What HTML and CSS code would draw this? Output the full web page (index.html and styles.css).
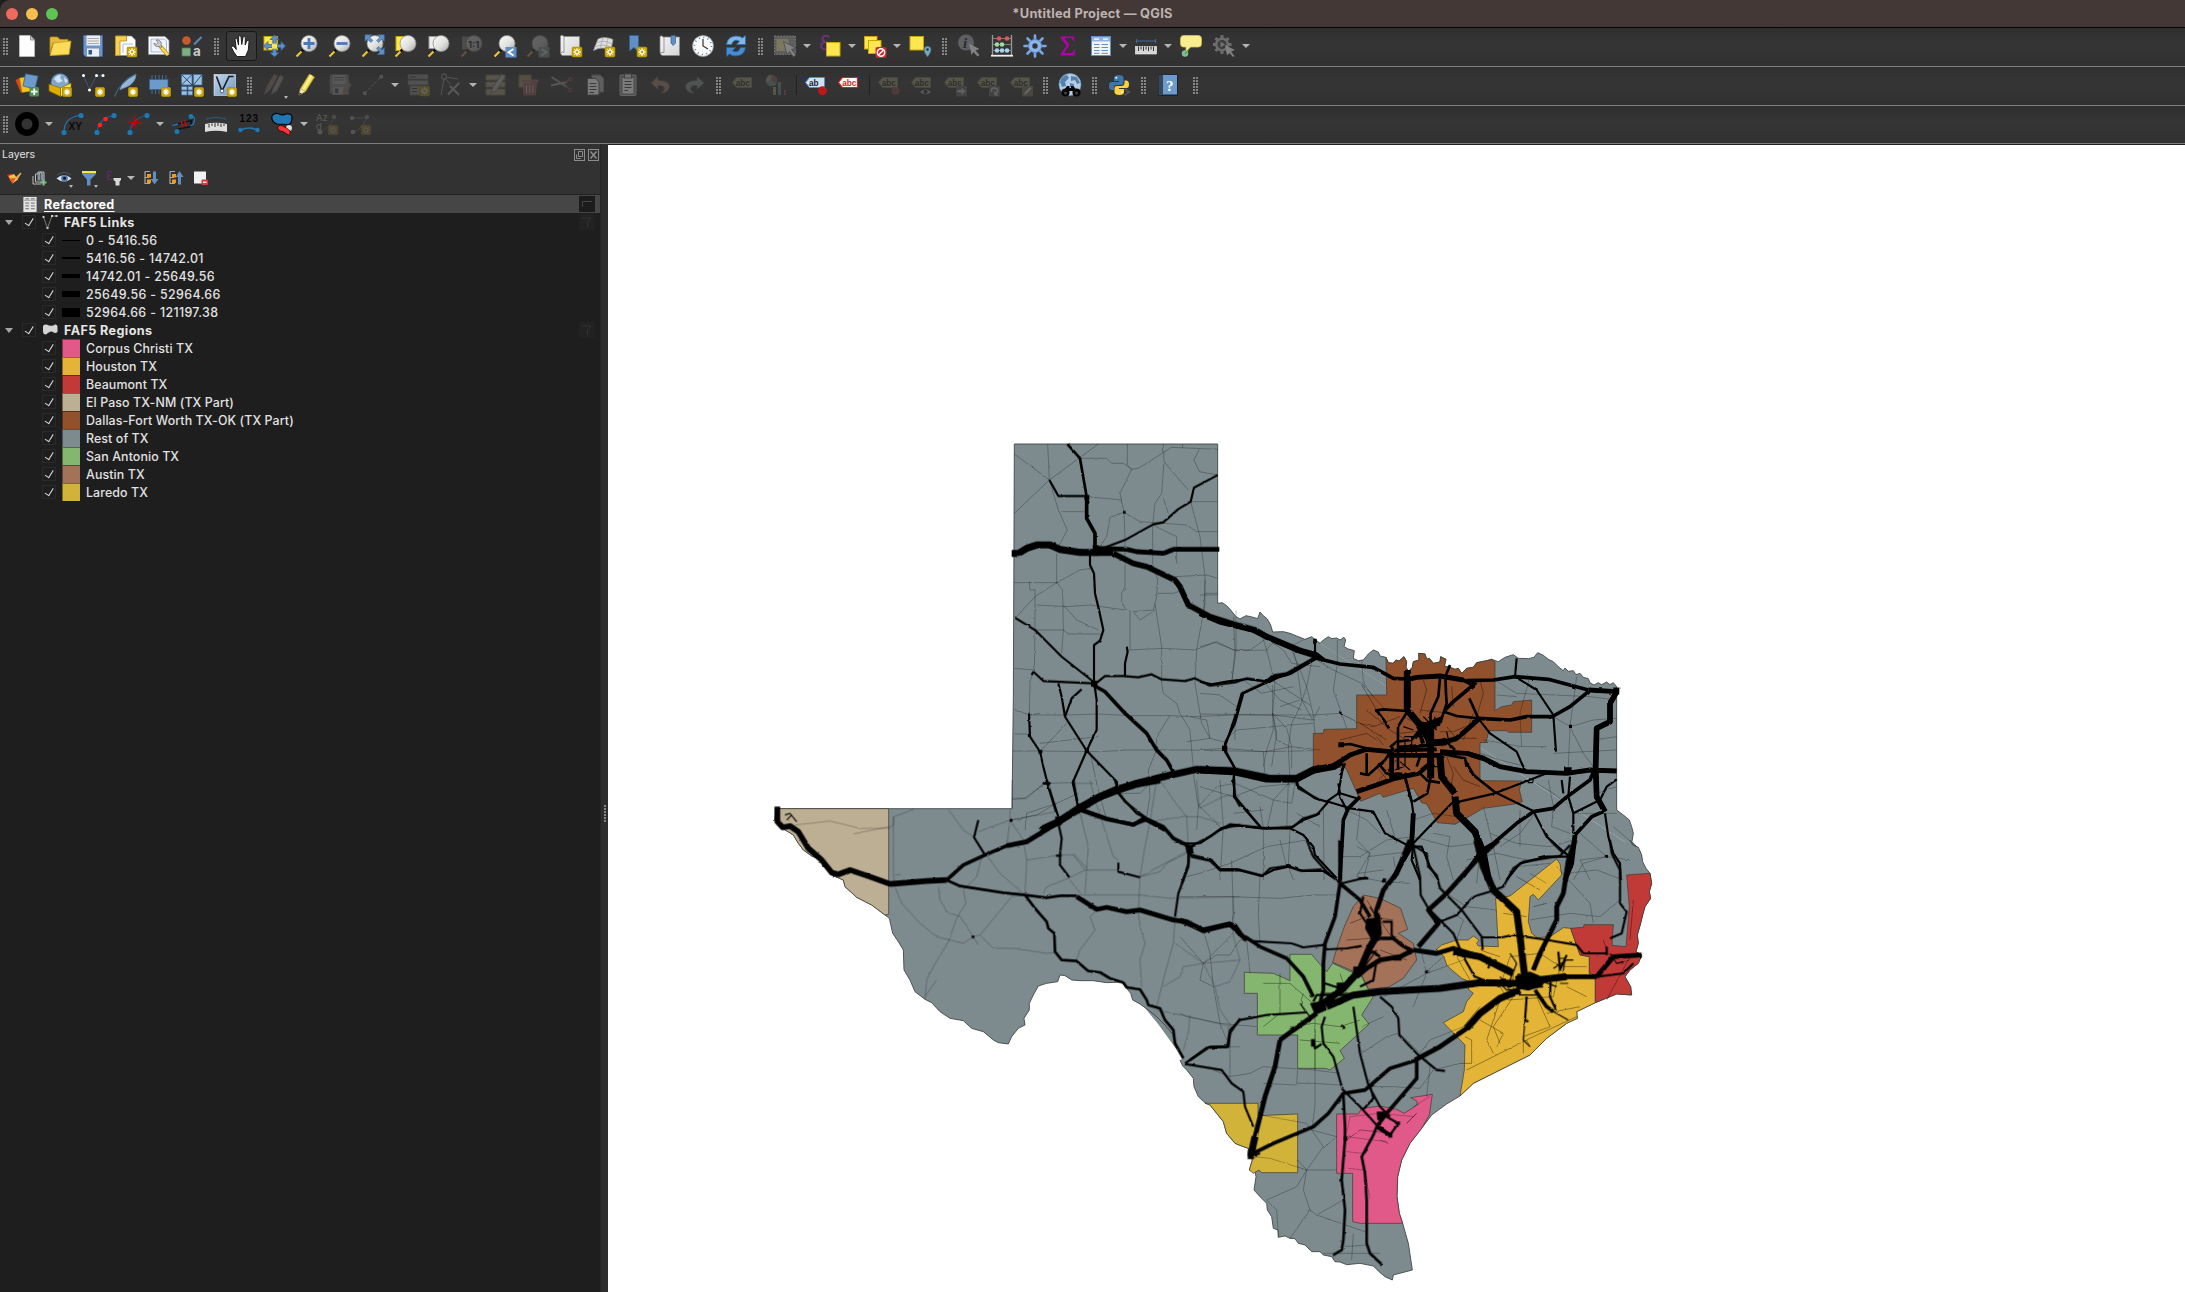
FILE: index.html
```html
<!DOCTYPE html>
<html lang="en">
<head>
<meta charset="utf-8">
<title>*Untitled Project — QGIS</title>
<link rel="stylesheet" href="styles.css">
</head>
<body>
<svg class="defs" aria-hidden="true">
<defs>
<linearGradient id="lens" x1="0" y1="0" x2="1" y2="1"><stop offset="0" stop-color="#fafafa"/><stop offset=".55" stop-color="#e2e2e0"/><stop offset="1" stop-color="#a8a8a6"/></linearGradient>
<linearGradient id="paper" x1="0" y1="0" x2="1" y2="1"><stop offset="0" stop-color="#f4f4f4"/><stop offset="1" stop-color="#d6d6d6"/></linearGradient>
<linearGradient id="blueg" x1="0" y1="0" x2="1" y2="1"><stop offset="0" stop-color="#c3d7ec"/><stop offset="1" stop-color="#6c98c7"/></linearGradient>
<symbol id="badge" viewBox="0 0 11 11"><rect x=".5" y=".5" width="10" height="10" rx="1.6" fill="#c9a60a" stroke="#b08f00"/><path d="M5.5 2V9M2 5.5H9M3.1 3.1L7.9 7.9M7.9 3.1L3.1 7.9" stroke="#fff" stroke-width="1.2"/></symbol>
<symbol id="badge2" viewBox="0 0 11 11"><rect x=".5" y=".5" width="10" height="10" rx="1.6" fill="#c9a60a" stroke="#b08f00"/><circle cx="5.5" cy="5.5" r="2" fill="none" stroke="#fff" stroke-width="1.1"/><path d="M5.5 1.5V4M5.5 7V9.500M1.500 5.500H4M7 5.500H9.500M2.700 2.700L4.300 4.300M8.300 8.300L6.700 6.700M8.300 2.700L6.700 4.300M2.700 8.300L4.300 6.700" stroke="#fff" stroke-width=".9"/></symbol>
<symbol id="mag" viewBox="0 0 24 24"><path d="M1.500 22.500L8 16" stroke="#f1c232" stroke-width="2.200"/><path d="M6.500 17.500L10 14" stroke="#111" stroke-width="2.600"/><circle cx="14" cy="9.500" r="8" fill="url(#lens)" stroke="#8b8b88" stroke-width=".8"/></symbol>
<symbol id="i-new" viewBox="0 0 24 24"><path d="M4.500 1.500H15.500L19.500 6V22.500H4.500Z" fill="#fdfdfd" stroke="#ccc" stroke-width=".6"/><path d="M15.500 1.500V6H19.500Z" fill="#ccc" stroke="#777" stroke-width=".8"/></symbol>
<symbol id="i-open" viewBox="0 0 24 24"><path d="M2 4Q2 3 3 3H9.500L12 5.500H20V9L5 9L2 19Z" fill="#e4b93c" stroke="#b78d11" stroke-width=".8"/><path d="M5.500 9L23 7L21 20.500L2 21.500Z" fill="#fddc5a" stroke="#c79e21" stroke-width=".8"/></symbol>
<symbol id="i-save" viewBox="0 0 24 24"><path d="M2.500 1.500H21.500V22.500H4.500L2.500 20.500Z" fill="#6b96cb" stroke="#44699c" stroke-width=".8"/><rect x="5.500" y="1.500" width="13.500" height="10" fill="#eee"/><path d="M6.500 4.500H18M6.500 7H18M6.500 9.500H18" stroke="#aaa" stroke-width="1"/><rect x="6" y="14.500" width="12" height="8" fill="#eee"/><rect x="7.500" y="16" width="3.500" height="4.500" fill="#34588a"/></symbol>
<symbol id="i-layout" viewBox="0 0 24 24"><path d="M1.500 2H17.500L21.500 6V21.500H1.500Z" fill="#fdfdfd" stroke="#888" stroke-width=".6"/><path d="M1.500 2H12.500V7H6V21.500H1.500Z" fill="#f6d04f" stroke="#b78d11" stroke-width=".8"/><path d="M9 10H19M9 10V19" stroke="#8fb1d8" stroke-width=".8"/><use href="#badge2" x="12.500" y="12.500" width="11" height="11"/></symbol>
<symbol id="i-layman" viewBox="0 0 24 24"><path d="M1.500 2.500H18L22 6.500V20.500H1.500Z" fill="#fdfdfd" stroke="#999" stroke-width=".7"/><path d="M4 5V18H19.500V7L17.500 5Z" fill="#eef4ff" stroke="#90a8d8" stroke-width=".8"/><path d="M13 12L21 21" stroke="#b78d11" stroke-width="4"/><path d="M13 12L21 21" stroke="#f6d95f" stroke-width="2.500"/><path d="M7 9Q7 13 12 12.500L14.500 13.500L14 8Q12 5 9 6L11 8.500L9.500 10.500Z" fill="#ccc" stroke="#777" stroke-width=".8"/></symbol>
<symbol id="i-style" viewBox="0 0 24 24"><circle cx="6.500" cy="6.500" r="4.300" fill="#c75b2b"/><path d="M14 10.500L21.500 3" stroke="#5b86b6" stroke-width="2.200"/><rect x="2" y="14" width="8.500" height="8" fill="#7fae82" stroke="#4f7d52" stroke-width=".8"/><text x="13" y="22" font-size="13.500" font-weight="700" fill="#c8c8c8" font-family="Inter">a</text></symbol>
<symbol id="i-pan" viewBox="0 0 24 24"><path d="M8 22.500Q4 17.500 2.500 13.500Q2.500 11.500 4.500 12L7.300 15.500L6 5Q6.500 3.300 8 4.500L9.500 11L9.700 2.500Q10.800 .8 12 2.500L12.800 10.500L14 3Q15.300 1.700 16.300 3.500L16.200 11L18 6.500Q19.700 5.500 20 7.500L19.300 16L16.500 22.500Z" fill="#fff" stroke="#111" stroke-width=".9"/></symbol>
<symbol id="i-pansel" viewBox="0 0 24 24"><rect x="2" y="2.500" width="13.500" height="13.500" fill="#fde64f" stroke="#c9a60a"/><path d="M12.500 1L17 5.500H14.200V10.500H19V7.500L23.500 12L19 16.500V13.500H14.200V18.500H17L12.500 23L8 18.500H10.800V13.500H6V16.500L1.500 12L6 7.500V10.500H10.800V5.500H8Z" fill="#5f8fc4" stroke="#2f5f94" stroke-width=".7"/><rect x="10" y="9.700" width="5" height="5" fill="#fde64f"/></symbol>
<symbol id="i-zin" viewBox="0 0 24 24"><use href="#mag" width="24" height="24"/><path d="M14 4V15M8.500 9.500H19.500" stroke="#4a7ab5" stroke-width="2.800"/></symbol>
<symbol id="i-zout" viewBox="0 0 24 24"><use href="#mag" width="24" height="24"/><path d="M8.500 9.500H19.500" stroke="#4a7ab5" stroke-width="2.800"/></symbol>
<symbol id="i-zfull" viewBox="0 0 24 24"><use href="#mag" width="24" height="24"/><path d="M4 .8H11L8.500 3L12 6.500L9.800 8.500L6.300 5.300L4 7.500ZM23.300 .8V7.500L21 5.300L17.500 8.500L15.500 6.500L19 3L16.500 .8ZM23.300 20.500H16.500L19 18L15.500 14.500L17.500 12.500L21 16L23.300 13.500Z" fill="#5f8fc4" stroke="#3a6a9f" stroke-width=".5"/></symbol>
<symbol id="i-zsel" viewBox="0 0 24 24"><rect x="2" y="2.500" width="13" height="14" fill="#fde64f" stroke="#c9a60a"/><use href="#mag" width="24" height="24"/></symbol>
<symbol id="i-zlay" viewBox="0 0 24 24"><rect x="2" y="2.500" width="13" height="12" fill="#eee" stroke="#999"/><use href="#mag" width="24" height="24"/></symbol>
<symbol id="i-znat" viewBox="0 0 24 24"><rect x="2" y="2.500" width="13" height="13" fill="#999"/><use href="#mag" width="24" height="24"/><text x="8" y="13.500" font-size="9.500" font-weight="700" font-family="Inter" fill="#111">1:1</text></symbol>
<symbol id="i-zlast" viewBox="0 0 24 24"><use href="#mag" width="24" height="24"/><rect x="12.500" y="13" width="11" height="10.500" fill="#5f8fc4"/><path d="M20.500 15L15.500 18.200L20.500 21.500" fill="none" stroke="#fff" stroke-width="1.800"/></symbol>
<symbol id="i-znext" viewBox="0 0 24 24"><use href="#mag" width="24" height="24"/><rect x="12.500" y="13" width="11" height="10.500" fill="#8aa"/><path d="M15.500 15L20.500 18.200L15.500 21.500" fill="none" stroke="#fff" stroke-width="1.800"/></symbol>
<symbol id="i-map" viewBox="0 0 24 24"><path d="M5 2.500H20.500V21.500H3Q1.500 20 1.500 18V2Q2.500 .5 4.500 2Z" fill="url(#paper)" stroke="#888" stroke-width=".7"/><path d="M5 2V18.500Q3.500 17 1.700 19" fill="none" stroke="#888" stroke-width=".8"/><use href="#badge2" x="12.500" y="12.500" width="11" height="11"/></symbol>
<symbol id="i-map3" viewBox="0 0 24 24"><path d="M6 5Q13 2 21 5.500L19 16Q10 12 1.500 16.500Z" fill="#ddd" stroke="#999" stroke-width=".7"/><path d="M4 9Q12 5 20 10M2.500 13Q11 9 19.500 13.500M11 4L8 14M16 4L14 14" fill="none" stroke="#aaa" stroke-width=".8"/><use href="#badge2" x="12.500" y="12.500" width="11" height="11"/></symbol>
<symbol id="i-bmnew" viewBox="0 0 24 24"><path d="M4.500 1.500H13.500V18L9 13.500L4.500 17Z" fill="#5f8fc4" stroke="#2f5f94" stroke-width=".8"/><use href="#badge2" x="11.500" y="12.500" width="11" height="11"/></symbol>
<symbol id="i-bm" viewBox="0 0 24 24"><path d="M5 3H21.500V21.500H4Q2 20 2 18V2.500Q3.500 1 5 3Z" fill="url(#paper)" stroke="#888" stroke-width=".7"/><path d="M6 3V18.500H2" fill="none" stroke="#999"/><path d="M13 1.500H17.500V9L15.200 11.500L13 9Z" fill="#5f8fc4" stroke="#2f5f94" stroke-width=".7"/></symbol>
<symbol id="i-clock" viewBox="0 0 24 24"><circle cx="12" cy="12" r="10.500" fill="#fafafa" stroke="#999" stroke-width=".8"/><circle cx="12" cy="12" r="8.500" fill="none" stroke="#4a7ab5" stroke-width="1.600" stroke-dasharray="1 3.450"/><path d="M12 5V12L17 15" fill="none" stroke="#333" stroke-width="1.200"/></symbol>
<symbol id="i-refresh" viewBox="0 0 24 24"><path d="M2.500 10.500Q3.500 2.500 12 2Q16.500 2 18.500 4L21.500 1.500V10.500H12.500L15.500 7.300Q10 4 7.500 10.500Z" fill="#86b5e4" stroke="#2d6fb4" stroke-width=".9"/><path d="M21.500 13.500Q20.500 21.500 12 22Q7.500 22 5.500 20L2.500 22.500V13.500H11.500L8.500 16.700Q14 20 16.500 13.500Z" fill="#4a8bd0" stroke="#2460a0" stroke-width=".9"/></symbol>
<symbol id="i-select" viewBox="0 0 24 24"><rect x="1.500" y="2" width="21" height="18.500" fill="#999" stroke="#ddd" stroke-dasharray="1.500 1.500"/><rect x="3.500" y="5" width="12" height="12" fill="#dfd49a"/><path d="M10.500 7.500L23 14L18.500 15.500L23 21L20.500 23L16.500 17.500L14 21Z" fill="#eee" stroke="#555" stroke-width=".7"/></symbol>
<symbol id="i-expr" viewBox="0 0 24 24"><path d="M11.500 3.500Q10 1.500 7.500 1.800Q4 2.500 4.500 5.500Q5 8 8.500 8Q3 8.500 3 11.500Q3.500 15.500 7.500 15.500Q10.500 15 11.500 12.500" fill="none" stroke="#6b3575" stroke-width="2"/><rect x="8.500" y="8.500" width="13.500" height="13.500" fill="#fde64f" stroke="#c9a60a"/></symbol>
<symbol id="i-desel" viewBox="0 0 24 24"><rect x="1.500" y="2.500" width="12.500" height="12.500" fill="#fde64f" stroke="#c9a60a"/><rect x="5.500" y="6.500" width="12.500" height="13" fill="#fde64f" stroke="#c9a60a"/><rect x="12.500" y="13" width="11" height="11" rx="2" fill="#d2232a"/><circle cx="18" cy="18.500" r="3.700" fill="none" stroke="#fff" stroke-width="1.500"/><path d="M15.500 21L20.500 16" stroke="#fff" stroke-width="1.500"/></symbol>
<symbol id="i-selloc" viewBox="0 0 24 24"><rect x="2" y="2.500" width="13.500" height="13.500" fill="#fde64f" stroke="#c9a60a"/><path d="M19.500 23Q16 18.500 16 15.500Q16.200 12.300 19.500 12.300Q23 12.500 23 15.500Q23 18.500 19.500 23Z" fill="#7aa7bd" stroke="#3f6f88" stroke-width=".8"/><circle cx="19.500" cy="15.500" r="1.300" fill="#234"/></symbol>
<symbol id="i-ident" viewBox="0 0 24 24"><circle cx="9" cy="8.500" r="8" fill="#99a"/><text x="6" y="14" font-size="15" font-style="italic" font-weight="700" font-family="Liberation Serif" fill="#222">i</text><path d="M12 9.500L22.500 15L18.500 16.500L22.500 21L20.500 22.500L16.500 18L14.500 21Z" fill="#eee"/></symbol>
<symbol id="i-abacus" viewBox="0 0 24 24"><path d="M2.500 1V21M21.500 1V21" stroke="#999" stroke-width="1.300"/><path d="M2.500 4.500H21.500M2.500 10.500H21.500M2.500 16.500H21.500" stroke="#888" stroke-width=".9"/><path d="M1 21.700H23" stroke="#eee" stroke-width="1.800"/><g fill="#e5545b"><circle cx="9" cy="4.500" r="2.300"/><circle cx="17" cy="4.500" r="2.300"/></g><g fill="#9edc9b"><circle cx="7" cy="10.500" r="2.300"/><circle cx="12" cy="10.500" r="2.300"/></g><g fill="#a5d4ee"><circle cx="7" cy="16.500" r="2.300"/><circle cx="12" cy="16.500" r="2.300"/><circle cx="17" cy="16.500" r="2.300"/></g></symbol>
<symbol id="i-gear" viewBox="0 0 24 24"><path d="M12 1.500V22.500M1.500 12H22.500M4.500 4.500L19.500 19.500M19.500 4.500L4.500 19.500" stroke="#79a7e3" stroke-width="2.600" stroke-linecap="round"/><circle cx="12" cy="12" r="6.500" fill="#8db5ea" stroke="#5b8bd0" stroke-width="1"/><circle cx="12" cy="12" r="2.700" fill="#343434"/></symbol>
<symbol id="i-sum" viewBox="0 0 24 24"><path d="M4.500 2.500H18L18.500 7.500H17.500Q16.500 4 14 4H8.500L13.500 11L8 19H15Q17.500 18.500 18.500 15.500H19.500L18.500 21.500H4.500V20L10.500 12L4.500 3.700Z" fill="#b400a8"/></symbol>
<symbol id="i-table" viewBox="0 0 24 24"><rect x="2.500" y="2.500" width="19" height="19" fill="#f4f4f4" stroke="#5f8fc4"/><rect x="3" y="3" width="18" height="4.500" fill="#8fb5df"/><path d="M5 5.200H10M14 5.200H19" stroke="#fff" stroke-width="1.300"/><path d="M5 10.500H10.500M12.500 10.500H19M5 13.500H10.500M12.500 13.500H19M5 16.500H10.500M12.500 16.500H19M5 19.300H10.500M12.500 19.300H19" stroke="#5f8fc4" stroke-width="1"/></symbol>
<symbol id="i-measure" viewBox="0 0 24 24"><path d="M2 7H22M2.500 5V9M21.500 5V9" stroke="#3f6a94" stroke-width="1.200"/><rect x="1.500" y="12.500" width="21" height="7.500" fill="#d5d5d5" stroke="#f3f3f3" stroke-width=".6"/><path d="M4.500 12.500V17M7 12.500V15.500M9.500 12.500V17M12 12.500V15.500M14.500 12.500V17M17 12.500V15.500M19.500 12.500V17" stroke="#333" stroke-width="1"/></symbol>
<symbol id="i-tip" viewBox="0 0 24 24"><path d="M4.500 1.500H19.500Q22.500 1.500 22.500 5V9.500Q22.500 13 19.500 13H12Q9 14 8 19Q6.500 17 7 13H4.500Q1.500 13 1.500 9.500V5Q1.500 1.500 4.500 1.500Z" fill="#f9ed94" stroke="#d9c243" stroke-width=".8"/><circle cx="6" cy="19.500" r="3.200" fill="#7fbf86"/><path d="M6 20L10 15" stroke="#4c8a53" stroke-width="1"/></symbol>
<symbol id="i-act" viewBox="0 0 24 24"><path d="M10 1V20M1 10.500H19.500M3.500 4L16.500 17M16.500 4L3.500 17" stroke="#bbb" stroke-width="3"/><circle cx="10" cy="10.500" r="7" fill="#bbb"/><circle cx="10" cy="10.500" r="4.500" fill="#444"/><path d="M8.500 7.500L13 10.500L8.500 13.500Z" fill="#ccc"/><path d="M13 11L23 16L19 17.500L22.500 22L21 23L17.500 19L15 21.500Z" fill="#eee"/></symbol>
<symbol id="i-dsm" viewBox="0 0 24 24"><path d="M.5 7L5 5L9 17L6 20Z" fill="#d9481c"/><path d="M4.500 5L16 3L18 18L7 19.500Z" fill="#f4c518" stroke="#9a7a00" stroke-width=".5"/><path d="M10.500 .8L23 3L20 16L8 13Z" fill="#6b9acb" stroke="#39638f" stroke-width=".8"/><rect x="14.500" y="14" width="9.500" height="9.500" rx="1.500" fill="#4f9157"/><path d="M19.200 15.500V22M16 18.700H22.500" stroke="#fff" stroke-width="1.800"/></symbol>
<symbol id="i-gpkg" viewBox="0 0 24 24"><circle cx="12" cy="9.500" r="9" fill="#7fa6cc" stroke="#41688f" stroke-width=".6"/><path d="M6 6Q9 1.500 13 2L12 5L15 8L10 10L8 8ZM16 4L20 8L17 10Z" fill="#d5e3ef"/><path d="M1 11L12.500 15V23.500L1 18Z" fill="#e0ad00" stroke="#8a6a00" stroke-width=".7"/><path d="M12.500 15L23 10V18L12.500 23.500Z" fill="#ffe347" stroke="#8a6a00" stroke-width=".7"/><use href="#badge" x="14" y="14" width="10" height="10"/></symbol>
<symbol id="i-shp" viewBox="0 0 24 24"><path d="M2.500 3L8.500 16L15.500 3H22" fill="none" stroke="#3c5878" stroke-width="1"/><g fill="#fff"><circle cx="2.500" cy="2.500" r="1.500"/><circle cx="8.500" cy="17" r="1.500"/><circle cx="15.500" cy="2.500" r="1.500"/><circle cx="22" cy="2.500" r="1.500"/></g><use href="#badge" x="14" y="14" width="10" height="10"/></symbol>
<symbol id="i-spl" viewBox="0 0 24 24"><path d="M22 1Q22 5 20 8Q17 13 10 15Q7 16 6 17Q7 8 22 1Z" fill="url(#blueg)" stroke="#6c93b5" stroke-width=".6"/><path d="M22 1Q6 9 .5 23.500" fill="none" stroke="#3f678f" stroke-width="1.100"/><use href="#badge" x="14" y="14" width="10" height="10"/></symbol>
<symbol id="i-mem" viewBox="0 0 24 24"><path d="M5 2V21M8.500 2V21M12 2V21M15.500 2V21M19 2V21" stroke="#4c6b8c" stroke-width="1"/><rect x="2.500" y="6.500" width="18.500" height="10" fill="#6b9acb" stroke="#39638f" stroke-width=".8"/><use href="#badge" x="14" y="14" width="10" height="10"/></symbol>
<symbol id="i-mesh" viewBox="0 0 24 24"><path d="M1.500 1.500H12V12H1.500ZM13.500 1.500H22V12H13.500ZM1.500 13.500H7V17H1.500ZM8 13.500H12.500V17H8ZM1.500 18H7V22H1.500ZM8 18H12.500V22H8Z" fill="#9cc0e4" stroke="#44719f" stroke-width=".8"/><path d="M1.500 1.500L12 12M12 1.500L1.500 12M22 1.500L13.500 12" stroke="#1c3f63" stroke-width=".9"/><use href="#badge" x="14" y="14" width="10" height="10"/></symbol>
<symbol id="i-virt" viewBox="0 0 24 24"><rect x="1" y="1.500" width="21.500" height="21" fill="url(#blueg)" stroke="#dfe9f3" stroke-width=".6"/><path d="M3.500 3.500L9 18L16 3.500H20.500" fill="none" stroke="#1a1a1a" stroke-width="1.600"/><circle cx="9" cy="18" r="1.800" fill="#fff" stroke="#333" stroke-width=".7"/><use href="#badge" x="14" y="14" width="10" height="10"/></symbol>
<symbol id="i-edits" viewBox="0 0 24 24"><path d="M2 22L4 15L12 1L16 3L8 17Z" fill="#a58f86"/><path d="M9 22L11 15L18 2L22 4L15 18Z" fill="#b8b0aa" stroke="#555" stroke-width=".6"/></symbol>
<symbol id="i-pencil" viewBox="0 0 24 24"><path d="M4 22L5.500 15.500L14.500 1L19.500 4L10.500 18.500Z" fill="#f2df55" stroke="#a8932c" stroke-width=".8"/><path d="M16.500 2.500L8 17" stroke="#fff7a8" stroke-width="1.500"/><path d="M4 22L5.500 15.500L10.500 18.500Z" fill="#f2e8c8" stroke="#8a7a40" stroke-width=".5"/><path d="M4 22L4.600 19.500L6.600 20.700Z" fill="#222"/></symbol>
<symbol id="i-saved" viewBox="0 0 24 24"><path d="M2 1.500H20.500V21.500H4L2 19.500Z" fill="#999" stroke="#777" stroke-width=".8"/><rect x="5" y="2" width="12.500" height="9" fill="#ccc"/><path d="M6 4.500H16.500M6 7H16.500" stroke="#666"/><rect x="5.500" y="14" width="10" height="7.500" fill="#ccc"/><rect x="7" y="15.500" width="3.500" height="4.500" fill="#444"/><path d="M14 22L15 18L20 9.500L23.500 11.500L18 20.500Z" fill="#a58f76"/></symbol>
<symbol id="i-line" viewBox="0 0 24 24"><path d="M4 20L20 4" stroke="#aaa" stroke-dasharray="3 1.500"/><path d="M2 18.500H5.500V22H2ZM18.500 2H22V5.500H18.500Z" fill="#bbb"/></symbol>
<symbol id="i-addrec" viewBox="0 0 24 24"><path d="M2 1.500H22V6H2ZM2 7.500H22V12H2ZM4 13V22H20V13" fill="#aaa" stroke="#777" stroke-width=".8"/><path d="M6 15.500H11M6 18.500H11M13 15.500H18M4 4H10" stroke="#333"/><use href="#badge2" x="13" y="12.500" width="11" height="11"/></symbol>
<symbol id="i-vert" viewBox="0 0 24 24"><circle cx="5" cy="3.500" r="2.500" fill="none" stroke="#aaa" stroke-width="1.300"/><path d="M5 6L2 22M7 4L19 6M7 6L11 11" stroke="#bbb" stroke-width="1"/><path d="M11 13L20 22M9 21.500L20 10" stroke="#ccc" stroke-width="2"/></symbol>
<symbol id="i-multi" viewBox="0 0 24 24"><path d="M2 2H21V7H2ZM2 9H21V14H2ZM2 16H21V22H2Z" fill="#c9c088" stroke="#8a855a"/><path d="M7 20L9 14L18 1L21.500 3.500L12.500 17.500Z" fill="#ddd" stroke="#666" stroke-width=".7"/></symbol>
<symbol id="i-del" viewBox="0 0 24 24"><rect x="2" y="2" width="12" height="12" fill="#b9ae6a" stroke="#8a855a"/><path d="M4 7H21V9H4ZM6 10H19.500L18.500 22H7Z" fill="#b55b5b" stroke="#d99" stroke-width=".6"/><path d="M9.500 12V20M12.700 12V20M16 12V20" stroke="#eee" stroke-width="1"/></symbol>
<symbol id="i-cut" viewBox="0 0 24 24"><path d="M1.500 4L17 14M1 12.500L17 9" stroke="#bbb" stroke-width="2"/><path d="M15 9L20 6.500M16 13L19 16" stroke="#a55" stroke-width="1.600"/><circle cx="20.500" cy="6" r="1.700" fill="none" stroke="#a55" stroke-width="1.200"/><circle cx="20" cy="17" r="1.700" fill="none" stroke="#a55" stroke-width="1.200"/></symbol>
<symbol id="i-copy" viewBox="0 0 24 24"><path d="M9 2H17L20.500 5.500V19H9Z" fill="#999" stroke="#777"/><path d="M4.500 5.500H12.500L16 9V22H4.500Z" fill="#ddd" stroke="#555"/><path d="M6.500 10.500H13.500M6.500 13.500H13.500M6.500 16.500H13.500M6.500 19.500H11" stroke="#444"/></symbol>
<symbol id="i-paste" viewBox="0 0 24 24"><rect x="4" y="2" width="16" height="20.500" rx="1" fill="#777" stroke="#aaa"/><rect x="6.500" y="5" width="11" height="15.500" fill="#ddd"/><rect x="8.500" y="1" width="7" height="4" fill="#ccc" stroke="#555"/><path d="M8.500 8.500H15.500M8.500 11.500H15.500M8.500 14.500H15.500M8.500 17.500H12" stroke="#444"/></symbol>
<symbol id="i-undo" viewBox="0 0 24 24"><path d="M2 10L9 3.500V7.500Q20 7.500 20.500 13.500Q20 19.500 12 20.500Q16.500 17 15 14Q13.500 12 9 12.500V16.500Z" fill="#c7a08a" stroke="#7d5a43" stroke-width=".7"/></symbol>
<symbol id="i-redo" viewBox="0 0 24 24"><path d="M22 10L15 3.500V7.500Q4 7.500 3.500 13.500Q4 19.500 12 20.500Q7.500 17 9 14Q10.500 12 15 12.500V16.500Z" fill="#9fb7ac" stroke="#5a6d64" stroke-width=".7"/></symbol>
<symbol id="tagd" viewBox="0 0 24 24"><path d="M1.500 9.500L5.500 4.500H20.500V14.500H5.500Z" fill="#c4bd8e" stroke="#8a855a" stroke-width=".8"/><text x="4.800" y="12.600" font-size="8.200" font-weight="700" font-family="Liberation Sans" fill="#111">abc</text></symbol>
<symbol id="i-diag" viewBox="0 0 24 24"><path d="M7.500 7.500V1.500A6 6 0 0 1 13 9.500Z" fill="#a66"/><path d="M7.500 7.500L13 10A6 6 0 0 1 2 9Z" fill="#7a9"/><path d="M7.500 7.500L2 9A6 6 0 0 1 7.500 1.500Z" fill="#cb8"/><path d="M9 14H12V22H9Z" fill="#cb8"/><path d="M14 9H17V22H14Z" fill="#7a9"/><path d="M20 17H22V22H20Z" fill="#a66"/></symbol>
<symbol id="i-labpin" viewBox="0 0 24 24"><path d="M1.500 9.500L5.500 4.500H20.500V14.500H5.500Z" fill="#cfe3f9" stroke="#4a8fd8" stroke-width="1"/><text x="5" y="12.600" font-size="8.200" font-weight="700" font-family="Liberation Sans" fill="#222">ab</text><path d="M18 8V16" stroke="#ddd" stroke-width="2.500"/><circle cx="18.500" cy="17.800" r="4.500" fill="#b7191c"/></symbol>
<symbol id="i-labred" viewBox="0 0 24 24"><path d="M1.500 9.500L5.500 4.500H20.500V14.500H5.500Z" fill="#fff" stroke="#e8191c" stroke-width="1.200"/><text x="5.200" y="12.600" font-size="8.200" font-weight="700" font-family="Liberation Sans" fill="#d8191c">abc</text></symbol>
<symbol id="i-l1" viewBox="0 0 24 24"><use href="#tagd" width="24" height="24"/><circle cx="18.500" cy="18" r="4" fill="#a05050"/></symbol>
<symbol id="i-l2" viewBox="0 0 24 24"><use href="#tagd" width="24" height="24"/><path d="M10 19Q15.500 13.500 21 19Q15.500 23.500 10 19Z" fill="#ccc"/><circle cx="15.500" cy="18.700" r="2" fill="#123"/></symbol>
<symbol id="i-l3" viewBox="0 0 24 24"><use href="#tagd" width="24" height="24"/><rect x="13" y="13" width="11" height="10.500" fill="#777"/><path d="M14.500 17H18.500V14.500L22.500 18.300L18.500 22V19.500H14.500Z" fill="#eee"/></symbol>
<symbol id="i-l4" viewBox="0 0 24 24"><use href="#tagd" width="24" height="24"/><rect x="13" y="13" width="11" height="10.500" fill="#777"/><path d="M15.500 19Q14.500 15 18.500 15Q22.500 15.500 21.500 19L19 22M19 22V18.500M19 22H21.500" fill="none" stroke="#eee" stroke-width="1.500"/></symbol>
<symbol id="i-l5" viewBox="0 0 24 24"><use href="#tagd" width="24" height="24"/><rect x="13" y="13" width="11" height="10.500" fill="#8a8468"/><path d="M15 22L16 19L21 14L22.500 15.500L17.500 21Z" fill="#fff"/></symbol>
<symbol id="i-meta" viewBox="0 0 24 24"><circle cx="12" cy="11.500" r="11" fill="#b4cde6" stroke="#6d90b0" stroke-width=".7"/><path d="M2 9Q3 3 9 2L11 5L7 9L8 13L4 14ZM13 3L19 4L22 10L19 11L17 7L13 8ZM12 10L16 11L15 15L12 14Z" fill="#5580ab"/><path d="M9 13H11.500V15H13V13H15.500L19 18H5.500Z" fill="#050505"/><circle cx="7.500" cy="19.500" r="4" fill="#050505"/><circle cx="18.500" cy="19.500" r="4" fill="#050505"/><circle cx="7.500" cy="20" r="1.500" fill="#444"/><circle cx="18.500" cy="20" r="1.500" fill="#444"/></symbol>
<symbol id="i-py" viewBox="0 0 24 24"><path d="M11.500 2Q7 2 7 5V8H12V9H4.500Q2 9 2 13Q2 17 5 17H7V14Q7 12 9.500 12H14Q16.500 12 16.500 9.500V5Q16.500 2 11.500 2Z" fill="#3b77a8"/><path d="M12.500 22Q17 22 17 19V16H12V15H19.500Q22 15 22 11.500Q22 7.500 19 7.500H17.500V10.500Q17 13 14.500 13H10Q7.500 13 7.500 15.500V19Q7.500 22 12.500 22Z" fill="#fdd23e"/><circle cx="9.300" cy="4.800" r="1" fill="#fff"/><circle cx="14.800" cy="19.200" r="1" fill="#fff"/><path d="M17.500 16L22.500 19L17.500 22" fill="none" stroke="#555" stroke-width="1.700"/></symbol>
<symbol id="i-help" viewBox="0 0 24 24"><rect x="2" y="1.500" width="20" height="21.500" fill="#182330"/><rect x="2.500" y="2" width="4.500" height="20" fill="#36475a"/><rect x="7" y="2" width="14" height="19.500" fill="#6b9acb"/><text x="10" y="17.500" font-size="15" font-family="Liberation Serif" font-weight="700" fill="#fff">?</text></symbol>
<symbol id="i-ring" viewBox="0 0 24 24"><circle cx="12" cy="12" r="8.700" fill="#333" stroke="#000" stroke-width="6.400"/></symbol>
<symbol id="i-xy" viewBox="0 0 24 24"><path d="M4 20Q4 5 20.500 3.500" fill="none" stroke="#1f77b4" stroke-width="1.200"/><circle cx="4" cy="20.500" r="2.600" fill="#1f77b4"/><circle cx="21" cy="3.500" r="2.600" fill="#1f77b4"/><text x="8.500" y="17.500" font-size="10" font-weight="700" font-family="Liberation Sans" fill="#0a0a0a">XY</text></symbol>
<symbol id="i-red" viewBox="0 0 24 24"><path d="M4 20Q5 7 20.500 3.500" fill="none" stroke="#1c5f90" stroke-width="1.200"/><circle cx="4" cy="20.500" r="2.600" fill="#1f77b4"/><circle cx="21" cy="3.500" r="2.600" fill="#1f77b4"/><circle cx="7" cy="13" r="2.300" fill="#f22"/><circle cx="12.500" cy="7" r="2.300" fill="#f22"/></symbol>
<symbol id="i-cross" viewBox="0 0 24 24"><path d="M4 20Q5 7 20.500 3.500" fill="none" stroke="#1c5f90" stroke-width="1.200"/><circle cx="4" cy="20.500" r="2.600" fill="#1f77b4"/><circle cx="21" cy="3.500" r="2.600" fill="#1f77b4"/><path d="M2 9.500L16 11.500M5.500 15.500L12.500 7M8 3.500L10 16.500" stroke="#c00" stroke-width="1.300"/></symbol>
<symbol id="i-par" viewBox="0 0 24 24"><path d="M2 13L20.500 8.500L19.500 14.500L5.500 17.500L6 19" fill="none" stroke="#0d1720" stroke-width="1.600"/><path d="M22 5L24 6.500L22.500 12L19 14M1.500 13.500L7 12" fill="none" stroke="#1f77b4" stroke-width="1.300"/><path d="M10 9L12 15M13.500 8.500L15.500 14.500" stroke="#e00" stroke-width="1.200"/><circle cx="20" cy="4.500" r="2.500" fill="#1f77b4"/><circle cx="6" cy="19.500" r="2.500" fill="#1f77b4"/></symbol>
<symbol id="i-rul" viewBox="0 0 24 24"><path d="M2 7Q12 4 22 7" fill="none" stroke="#2d5272" stroke-width="1.500"/><path d="M1 12Q12 9.500 23 12V20Q12 17.500 1 20Z" fill="#ddd"/><path d="M5 12V15.500M8 11.500V14M11 11V15M14 11V14M17 11.500V15M20 12V14" stroke="#333" stroke-width="1"/></symbol>
<symbol id="i-123" viewBox="0 0 24 24"><text x="2.500" y="10" font-size="10" font-weight="700" font-family="Liberation Sans" letter-spacing=".9" fill="#050505">123</text><path d="M4 18Q12 14 20 18" fill="none" stroke="#1f77b4" stroke-width="1.500"/><circle cx="3.500" cy="18" r="2.300" fill="#1f77b4"/><circle cx="20.500" cy="18" r="2.300" fill="#1f77b4"/></symbol>
<symbol id="i-poly" viewBox="0 0 24 24"><path d="M2 4Q4 .5 8 1.500Q12 4 16 2Q21.500 1 22 5Q22 11 19 12.500Q12 12 7 12Q1 10 2 4Z" fill="#1f77b4" stroke="#050505" stroke-width="1.200"/><circle cx="19" cy="16" r="3" fill="#ddd"/><path d="M7.500 15Q10 12 13 14Q17 16 20 19Q21 22 18.500 23Q16 21.500 13 19.500Q8 19.500 7.500 15Z" fill="#f33" stroke="#200" stroke-width=".8"/></symbol>
<symbol id="i-az" viewBox="0 0 24 24"><text x="1" y="8.500" font-size="9.500" font-family="Inter" fill="#ccc">Az</text><text x="1" y="17.500" font-size="9.500" font-family="Inter" fill="#ccc">d</text><circle cx="5" cy="20" r="2.500" fill="#bbb"/><circle cx="19" cy="5" r="2.200" fill="#998"/><path d="M7 19Q15 16 19 5" fill="none" stroke="#777" stroke-width=".8"/><g opacity=".7"><use href="#badge2" x="12.500" y="12.500" width="11" height="11"/></g></symbol>
<symbol id="i-az2" viewBox="0 0 24 24"><path d="M3 6H19M6 20Q15 16 19 5" fill="none" stroke="#999" stroke-width=".8"/><circle cx="4" cy="6" r="2" fill="#bbb"/><circle cx="5" cy="20" r="2.300" fill="#bbb"/><circle cx="19" cy="5" r="2.200" fill="#998"/><g opacity=".7"><use href="#badge2" x="12.500" y="12.500" width="11" height="11"/></g></symbol>
<symbol id="p-brush" viewBox="0 0 16 16"><path d="M1 5L5 3.500L9 11L6.500 13.500Z" fill="#d22"/><path d="M2.500 6L8 4L12 9.500L6.500 13.500Z" fill="#fbc04a"/><path d="M6.500 13.500L3 8.500L10 8Z" fill="#e05a28"/><path d="M9 8L14.500 2.500L15.500 3.500L11 10Z" fill="#e8a85a"/></symbol>
<symbol id="p-add" viewBox="0 0 16 16"><path d="M2 6V14H10M4.500 4V12H13V2H7V4Z" fill="none" stroke="#bbb"/><rect x="6" y="2" width="7.500" height="9" fill="#9ab" opacity=".35"/><path d="M8 10V3.500Q9.500 1 11 3.500V10" fill="none" stroke="#bcd"/><path d="M12.500 9.500V15.500M9.500 12.500H15.500" stroke="#7fbf86" stroke-width="2.200"/></symbol>
<symbol id="p-eye" viewBox="0 0 16 16"><path d="M.5 8.500Q8 2 15.500 8.500Q8 14.500 .5 8.500Z" fill="#dde6ee"/><circle cx="8.500" cy="8.300" r="3.400" fill="#4f7fae"/><circle cx="8.500" cy="8.300" r="1.500" fill="#0b1725"/><path d="M1 5Q8 0 15 5" fill="none" stroke="#555"/></symbol>
<symbol id="p-fil" viewBox="0 0 16 16"><path d="M1 1H15V3.500H1Z" fill="#ffe347"/><path d="M1 4H15L9.500 9.500V15.500H6V9.500Z" fill="#5f8fc4"/></symbol>
<symbol id="p-exp" viewBox="0 0 16 16"><path d="M6.500 2Q1.500 0 1.500 3.500Q1.500 5.500 4.500 5.500Q.5 6 1.500 8.500Q3.500 10.500 6.500 8.500" fill="none" stroke="#5a2d62" stroke-width="1.500"/><path d="M7.500 8H15V10L13.500 11.500V15.500H9.500V11.500L7.500 10Z" fill="#d8d8d8"/></symbol>
<symbol id="p-down" viewBox="0 0 16 16"><path d="M2 1.500H7M2 1.500V13.500H7M2 7.500H6" fill="none" stroke="#aaa" stroke-width="1.200"/><path d="M4 4H8V7.500H4ZM4 9.500H8V13H4Z" fill="#f39a1e"/><path d="M10 1.500H13V9H15.500L11.500 14.500L7.800 9H10Z" fill="#5f8fc4"/></symbol>
<symbol id="p-up" viewBox="0 0 16 16"><path d="M2 1.500H7M2 1.500V13.500H7M2 7.500H6" fill="none" stroke="#aaa" stroke-width="1.200"/><path d="M4 4H8V7.500H4ZM4 9.500H8V13H4Z" fill="#f39a1e"/><path d="M10 14.500H13V7H15.500L11.500 1L7.800 7H10Z" fill="#5f8fc4"/></symbol>
<symbol id="p-rem" viewBox="0 0 16 16"><rect x="1" y="1.500" width="12" height="12" fill="#f1f1f1"/><rect x="8.500" y="9.500" width="6.500" height="5.500" rx="1" fill="#d8383c"/><path d="M10 12.300H13.500" stroke="#fff" stroke-width="1.300"/></symbol>
</defs>
</svg>

<div class="titlebar">
  <div class="lights"><i class="close"></i><i class="min"></i><i class="max"></i></div>
  <div class="title">*Untitled Project — QGIS</div>
</div>

<div class="toolbar">
  <i class="grip first"></i>
  <svg class="tool"><use href="#i-new"/></svg><svg class="tool"><use href="#i-open"/></svg><svg class="tool"><use href="#i-save"/></svg><svg class="tool"><use href="#i-layout"/></svg><svg class="tool"><use href="#i-layman"/></svg><svg class="tool"><use href="#i-style"/></svg>
  <i class="grip"></i>
  <span class="pressed"><svg class="tool"><use href="#i-pan"/></svg></span><svg class="tool"><use href="#i-pansel"/></svg><svg class="tool"><use href="#i-zin"/></svg><svg class="tool"><use href="#i-zout"/></svg><svg class="tool"><use href="#i-zfull"/></svg><svg class="tool"><use href="#i-zsel"/></svg><svg class="tool"><use href="#i-zlay"/></svg><svg class="tool dim"><use href="#i-znat"/></svg><svg class="tool"><use href="#i-zlast"/></svg><svg class="tool dim"><use href="#i-znext"/></svg><svg class="tool"><use href="#i-map"/></svg><svg class="tool"><use href="#i-map3"/></svg><svg class="tool"><use href="#i-bmnew"/></svg><svg class="tool"><use href="#i-bm"/></svg><svg class="tool"><use href="#i-clock"/></svg><svg class="tool"><use href="#i-refresh"/></svg>
  <i class="grip"></i>
  <svg class="tool half"><use href="#i-select"/></svg><i class="drop"></i><svg class="tool"><use href="#i-expr"/></svg><i class="drop"></i><svg class="tool"><use href="#i-desel"/></svg><i class="drop"></i><svg class="tool"><use href="#i-selloc"/></svg>
  <i class="grip"></i>
  <svg class="tool half"><use href="#i-ident"/></svg><svg class="tool"><use href="#i-abacus"/></svg><svg class="tool"><use href="#i-gear"/></svg><svg class="tool"><use href="#i-sum"/></svg><svg class="tool"><use href="#i-table"/></svg><i class="drop"></i><svg class="tool"><use href="#i-measure"/></svg><i class="drop"></i><svg class="tool"><use href="#i-tip"/></svg><svg class="tool half"><use href="#i-act"/></svg><i class="drop"></i>
</div>

<div class="toolbar">
  <i class="grip first"></i>
  <svg class="tool"><use href="#i-dsm"/></svg><svg class="tool"><use href="#i-gpkg"/></svg><svg class="tool"><use href="#i-shp"/></svg><svg class="tool"><use href="#i-spl"/></svg><svg class="tool"><use href="#i-mem"/></svg><svg class="tool"><use href="#i-mesh"/></svg><svg class="tool"><use href="#i-virt"/></svg>
  <i class="grip"></i>
  <span class="menu"><svg class="tool dim"><use href="#i-edits"/></svg><i class="tip"></i></span><svg class="tool"><use href="#i-pencil"/></svg><svg class="tool dim"><use href="#i-saved"/></svg><svg class="tool dim"><use href="#i-line"/></svg><i class="drop"></i><svg class="tool dim"><use href="#i-addrec"/></svg><svg class="tool dim"><use href="#i-vert"/></svg><i class="drop"></i><svg class="tool dim"><use href="#i-multi"/></svg><svg class="tool dim"><use href="#i-del"/></svg><svg class="tool dim"><use href="#i-cut"/></svg><svg class="tool half"><use href="#i-copy"/></svg><svg class="tool half"><use href="#i-paste"/></svg><svg class="tool dim"><use href="#i-undo"/></svg><svg class="tool dim"><use href="#i-redo"/></svg>
  <i class="grip"></i>
  <svg class="tool dim"><use href="#tagd"/></svg><svg class="tool dim"><use href="#i-diag"/></svg><i class="sep"></i><svg class="tool"><use href="#i-labpin"/></svg><svg class="tool"><use href="#i-labred"/></svg><i class="sep"></i><svg class="tool dim"><use href="#i-l1"/></svg><svg class="tool dim"><use href="#i-l2"/></svg><svg class="tool dim"><use href="#i-l3"/></svg><svg class="tool dim"><use href="#i-l4"/></svg><svg class="tool dim"><use href="#i-l5"/></svg>
  <i class="grip"></i>
  <svg class="tool"><use href="#i-meta"/></svg>
  <i class="grip"></i>
  <svg class="tool"><use href="#i-py"/></svg>
  <i class="grip"></i>
  <svg class="tool"><use href="#i-help"/></svg>
  <i class="grip end"></i>
</div>

<div class="toolbar last">
  <i class="grip first"></i>
  <svg class="tool"><use href="#i-ring"/></svg><i class="drop"></i><svg class="tool"><use href="#i-xy"/></svg><svg class="tool"><use href="#i-red"/></svg><svg class="tool"><use href="#i-cross"/></svg><i class="drop"></i><svg class="tool"><use href="#i-par"/></svg><svg class="tool"><use href="#i-rul"/></svg><svg class="tool"><use href="#i-123"/></svg><svg class="tool"><use href="#i-poly"/></svg><i class="drop"></i><svg class="tool dim"><use href="#i-az"/></svg><svg class="tool dim"><use href="#i-az2"/></svg>
</div>

<div class="main">
  <div class="panel">
    <div class="panel-head"><span>Layers</span>
      <svg width="27" height="14" fill="none" stroke="#8c8c8c"><rect x="1.500" y="1.500" width="10" height="11"/><path d="M5.500 3.500H9.500V8.500H5.500ZM3.500 6.500V10.500H7.500"/><rect x="15.500" y="1.500" width="10" height="11"/><path d="M17.500 3.500L23.500 10.500M23.500 3.500L17.500 10.500" stroke-width="1.500"/></svg>
    </div>
    <div class="panel-tools">
      <svg class="pt"><use href="#p-brush"/></svg><svg class="pt"><use href="#p-add"/></svg><span class="menu"><svg class="pt"><use href="#p-eye"/></svg><i class="tip"></i></span><span class="menu"><svg class="pt"><use href="#p-fil"/></svg><i class="tip"></i></span><svg class="pt"><use href="#p-exp"/></svg><i class="drop"></i><svg class="pt"><use href="#p-down"/></svg><svg class="pt"><use href="#p-up"/></svg><svg class="pt"><use href="#p-rem"/></svg>
    </div>
    <div class="tree">
      <div class="row selected"><svg class="lic tab" viewBox="0 0 16 18"><rect x="1" y="1" width="14" height="16" fill="#e4e4e4"/><path d="M1 4.500H15" stroke="#999"/><path d="M3 3H7M9 3H13M3 7.500H7M9 7.500H13M3 10.500H7M9 10.500H13M3 13.500H7M9 13.500H13" stroke="#666"/></svg><b class="u">Refactored</b><svg class="ind" viewBox="0 0 16 16"><path d="M3.500 10.500V5.500H13" fill="none" stroke="#444"/></svg></div>
      <div class="row"><i class="exp"></i><i class="chk"></i><svg class="lic" viewBox="0 0 16 16"><path d="M1.500 3L5.500 14L10 2H15" fill="none" stroke="#7a7a7a"/><path d="M.5 2H2.500V4H.500ZM4.500 13H6.500V15H4.500ZM9 1H11V3H9ZM13.500 1H15.500V3H13.500Z" fill="#ccc"/></svg><b>FAF5 Links</b><svg class="ind" viewBox="0 0 16 16"><path d="M3 4H12L8.500 8V13" fill="none" stroke="#333"/></svg></div>
      <div class="row sub"><i class="chk"></i><i class="ln l1"></i><span class="num">0 - 5416.56</span></div>
      <div class="row sub"><i class="chk"></i><i class="ln l2"></i><span class="num">5416.56 - 14742.01</span></div>
      <div class="row sub"><i class="chk"></i><i class="ln l3"></i><span class="num">14742.01 - 25649.56</span></div>
      <div class="row sub"><i class="chk"></i><i class="ln l4"></i><span class="num">25649.56 - 52964.66</span></div>
      <div class="row sub"><i class="chk"></i><i class="ln l5"></i><span class="num">52964.66 - 121197.38</span></div>
      <div class="row"><i class="exp"></i><i class="chk"></i><svg class="lic" viewBox="0 0 16 16"><path d="M1 4Q3 1.500 7 3.500Q11 4.500 13 2.500Q15.500 2 15.500 5V10Q13 12 10 9.500Q6 10 5 12Q1.500 13.500 1 10Z" fill="#d4d4d4"/></svg><b>FAF5 Regions</b><svg class="ind" viewBox="0 0 16 16"><path d="M3 4H12L8.500 8V13" fill="none" stroke="#333"/></svg></div>
      <div class="row sub"><i class="chk"></i><i class="sw corpus"></i><span>Corpus Christi TX</span></div>
      <div class="row sub"><i class="chk"></i><i class="sw houston"></i><span>Houston TX</span></div>
      <div class="row sub"><i class="chk"></i><i class="sw beaumont"></i><span>Beaumont TX</span></div>
      <div class="row sub"><i class="chk"></i><i class="sw elpaso"></i><span>El Paso TX-NM (TX Part)</span></div>
      <div class="row sub"><i class="chk"></i><i class="sw dallas"></i><span>Dallas-Fort Worth TX-OK (TX Part)</span></div>
      <div class="row sub"><i class="chk"></i><i class="sw rest"></i><span>Rest of TX</span></div>
      <div class="row sub"><i class="chk"></i><i class="sw sanantonio"></i><span>San Antonio TX</span></div>
      <div class="row sub"><i class="chk"></i><i class="sw austin"></i><span>Austin TX</span></div>
      <div class="row sub"><i class="chk"></i><i class="sw laredo"></i><span>Laredo TX</span></div>
    </div>
  </div>
  <div class="splitter"><i></i></div>
  <svg class="map" viewBox="608 145 1577 1147" width="1577" height="1147">
    <defs><filter id="rough" x="-5%" y="-5%" width="110%" height="110%"><feTurbulence type="fractalNoise" baseFrequency=".13" numOctaves="2" seed="4"/><feDisplacementMap in="SourceGraphic" scale="2" xChannelSelector="R" yChannelSelector="G"/></filter></defs>
    <path class="core" d="M1015 812L1022 798L1318 643L1640 853L1625 900L1184 1058L1160 1025L1080 925Z"/>
    <!-- Panhandle -->
    <g transform="translate(990 430) scale(.33333)">
      <path class="rest-f" d="M66 1134L70 800L73 42H683V520L697 518L710 527L722 540L738 560L750 567L768 557L790 562L803 566L810 546L820 557L832 567L842 585L848 606L880 605L900 610L920 618L945 628L965 620L990 640"/>
    </g>
    <!-- Trans-Pecos -->
    <g transform="translate(760 780) scale(.33333)">
      <path class="rest-f" d="M757 0V86H48L45 120L60 140L100 165L115 190L130 210L155 228L175 235L215 285L250 300L255 320L290 352L335 375L375 405L388 415L398 460L415 485L430 510L432 570L450 600L465 635L495 658L515 668L540 695L570 715L610 722L635 745L670 755L700 780L715 788L745 792L755 770L775 745L795 735L792 715L808 690L808 670L820 645L835 618L860 610L893 605L900 585L915 587L935 600L960 602L1000 602L1040 608L1085 606L1100 625L1112 640L1118 660L1140 672L1165 690L1190 710L1215 735L1240 765L1250 800L1272 840"/>
      <path class="rg" fill="#bcaf93" d="M48 86H386V403L375 405L335 375L290 352L255 320L250 300L215 285L175 235L155 228L130 210L115 190L100 165L60 140L45 120Z"/>
    </g>
    <!-- Red River and Dallas -->
    <g transform="translate(1200 580) scale(.33333)">
      <path class="rest-f" d="M360 190L370 180L385 170L395 176L410 174L420 180L432 172L437 180L432 200L445 207L463 212L460 235L475 242L490 240L505 222L520 210L535 216L540 228L558 232L565 248L580 250L588 240L597 243L612 230L620 245L618 262L626 274L637 262L640 245L657 240L656 220L675 222L680 238L688 235L700 250L720 246L722 230L738 238L733 258L750 262L765 268L775 265L785 280L800 265L820 262L830 248L860 242L875 238L895 245L915 232L940 224L955 235L985 236L1002 232L1013 218L1030 226L1045 238L1060 245L1075 260L1090 272L1095 264L1105 274L1120 272L1128 284L1140 280L1150 292L1165 296L1170 308L1182 315L1195 308L1205 314L1220 306L1230 314L1240 308L1250 320V690L1270 705L1288 720L1295 740L1300 760L1296 785L1310 800L1320 815"/>
      <path class="rg" fill="#91512d" d="M560 345L558 232L565 248L580 250L588 240L597 243L612 230L620 245L618 262L626 274L637 262L640 245L657 240L656 220L675 222L680 238L688 235L700 250L720 246L722 230L738 238L733 258L750 262L765 268L775 265L785 280L800 265L820 262L830 248L860 242L875 238L885 246V392L905 380L935 375L940 365L995 360V457H925L920 452L867 452L858 487L864 487L840 488V602L965 603L958 630L967 665L945 672L850 685L810 708L765 733L712 728L680 672L665 668L640 625L550 652L540 640L482 664L438 565L430 562L340 564V460H370L372 448L470 446V345Z"/>
    </g>
    <!-- Gulf coast -->
    <g transform="translate(1180 840) scale(.33333)">
      <path class="rest-f" d="M1350 0L1358 15L1375 22L1385 45L1388 65L1398 85L1410 100L1415 130L1408 155L1412 175L1395 200L1388 225L1382 250L1372 285L1375 310L1368 335L1385 345L1375 370L1350 390L1335 410L1352 440L1355 465L1310 462L1246 488L1190 515L1192 535L1160 550L1100 595L1050 645L980 680L880 730L840 768L800 792L755 825L725 865L690 910L665 960L653 1010L651 1070L658 1120L668 1150L685 1210L697 1290L640 1305L637 1320L615 1310L597 1295L580 1278L540 1270L500 1274L480 1266L465 1265L455 1250L430 1245L420 1235L395 1235L375 1215L355 1210L345 1196L330 1195L315 1188L295 1192L294 1170L280 1165L275 1130L262 1110L260 1090L240 1070L222 1050L228 1010L225 995L208 990L217 960L205 925L185 918L165 910L140 880L130 845L110 820L90 795L75 788L55 770L42 740L40 715L20 690L8 678L0 660"/>
      <path class="rg" fill="#e3b436" d="M1130 57L1140 72L1145 105L1075 180L1060 163L1050 170L1045 245L1055 280L1072 293L1110 290L1150 263L1172 265L1200 345L1228 350V400L1246 405V488L1190 515L1192 535L1160 550L1100 595L1050 645L980 680L880 730L840 768L853 690L855 615L790 548L850 515L860 485L880 460L865 448L868 425L845 415L830 402L815 390L800 375L792 350L770 328L785 315L830 300L865 300L880 288L897 300L890 310L895 318L955 320L947 175L990 168Z"/>
      <path class="rg" fill="#c23a38" d="M1172 265L1210 262L1212 254L1300 254L1296 316L1338 320L1348 200L1340 105L1410 100L1415 130L1408 155L1412 175L1395 200L1388 225L1382 250L1372 285L1375 310L1368 335L1385 345L1375 370L1350 390L1335 410L1352 440L1355 465L1310 462L1246 488V405L1228 400V350L1200 345Z"/>
      <path class="rg" fill="#a47159" d="M550 165L600 175L662 205L683 268L655 280L700 310L710 360L670 415L625 442L565 447L545 405L458 367L475 310L495 255L520 200Z"/>
      <path class="rg" fill="#85b66f" d="M330 343H395L430 385L440 395L458 370L545 410L563 445L580 470L545 525L567 552L480 632L493 655L450 690L437 685H353V585H232V460H193V397L280 400L330 422Z"/>
      <path class="rg" fill="#e15989" d="M470 822H535L545 805L600 798L650 808L672 820L712 795L710 783L692 773L757 763L748 825L725 865L690 910L665 960L653 1010L651 1070L658 1120L668 1150H540L518 1145V1000H470Z"/>
      <path class="rg" fill="#d2b33a" d="M75 790H234V827L353 822V998H245L237 990L220 1000L208 990L217 960L205 925L185 918L165 910L140 880L130 845L110 820L90 795Z"/>
    </g>

    <g filter="url(#rough)">
    <g class="thin">
      <path transform="translate(990 430) scale(.33333)" d="M73 72L178 150L73 250M173 42L178 150L205 240L232 300L205 350M178 150L325 42M270 85H350L365 100H400L425 118L445 115L520 68L545 52L683 58M412 42V105L425 118L390 190L402 247L405 330V470L395 490V520L410 540M520 42L522 95L515 190L495 220L488 285V400L503 450L500 500L490 540L430 545M522 95L560 140L595 180M628 58L612 90L628 125L683 135M577 42L578 55M290 200L395 210M402 247L360 262L350 320L330 350M402 247L450 275L550 282L590 285L620 305H683M520 205L535 250M602 215H683M602 215L630 320L645 440V520L620 660L615 760L635 880L660 925L700 935M488 285L560 320V400M215 245H290M73 458H200L270 420L305 415M200 370V458L135 500L75 565M118 455L120 480L135 482V600L133 720M200 458L218 480L220 600L215 670M140 525L230 530L300 525L405 540M220 525L260 570L325 600M220 600L235 612H340M135 600H220M420 540V660M495 540L450 570L430 545M418 660L520 655L615 660L680 635L730 660L780 660L830 625M495 520L515 650V760M555 440L650 435L683 445M503 490L550 490L580 480M645 490H683M730 560L735 660L725 760M73 715L133 720L120 750L118 850M118 855H230L325 852L420 857H540L600 860L735 855H850L968 870M73 838L118 855L150 850M118 910L150 965L230 880M68 963H150L325 965L420 960L600 960L825 965L905 950L990 960M73 912H118M150 940L325 920M515 760L520 790L560 820L570 850L600 900L605 960L610 1010M540 857L500 920L500 960M600 860L650 870L660 925L590 935M848 765V850L850 900L830 960L820 1010M905 640L920 700L935 810L968 870L990 830M870 830L930 810M848 850L890 895L905 950V1015M830 625L880 660L905 700L990 710M735 855L735 930M700 935L740 900L850 890M825 760L870 810L935 840M500 960L475 1020L480 1100L470 1160M68 1108L105 1105L165 1060M165 1060L250 1058M105 1200L110 1150L200 1120L265 1090M63 1170L140 1155L200 1120M610 1030L625 1130L620 1200M480 1060L450 1090L385 1090M625 1130L680 1070L735 1060L850 1110L905 1050M850 1110L830 1200M850 1110L905 1120L915 1060M300 965L320 1060L350 1170M895 1050L890 1200M630 1130L700 1200"/>
      <path transform="translate(1200 580) scale(.33333)" d="M0 45H53M15 0L12 90M0 200L45 187L108 212L200 210L215 190L270 200L310 180M108 90V212L95 310M187 170L200 210L225 310L218 400L230 460L215 560M0 402L218 405L340 405L420 400M270 195L320 320L340 405M350 240L400 270L485 310L557 390M412 180V250L400 330L425 400M425 400L440 445M335 245L320 320L300 380L275 430L265 500L270 600M485 240L490 310L520 350M340 405L345 460M0 340L60 345L110 380M215 440L270 435L340 430M0 510L75 505L190 515L340 512M190 515L195 590M215 300L330 375M130 300L185 340L280 320M270 500L230 480L218 400M0 620L100 650L180 620L290 610M60 600L70 740L60 900M180 680L190 745V900M270 745L265 860L280 900M370 680L372 900M290 700L360 740M100 700L190 690M440 690L500 720L540 760M480 690L470 780L510 820L490 900M420 830H480L560 780L640 770L750 800L830 790M560 690L590 790M700 760L750 770L740 830L760 900M640 720L700 700L770 710L820 745M475 880L550 870M850 680L870 760L950 790L1050 800L1120 780M870 760L880 800L900 900M960 690V800M1005 700L960 760L900 800M1045 600L1060 680L1055 740L1110 760M1110 440L1105 560M1110 440L1060 410M1110 440L1180 420L1250 415M885 300L950 340L1060 345L1170 350L1250 360M990 290L960 400L965 500L850 480M890 345L950 350M1130 290L1110 440L1150 520L1180 560M1040 500L965 500M840 520L900 540L980 560M1060 520L1250 510M1180 480L1250 470M1190 640L1250 620M1120 700L1250 700M1120 690L1060 640L1010 610M1140 760L1220 830L1290 840M1220 830L1150 850L1120 900M1240 740L1310 800M1140 840L1170 900"/>
      <path class="d" transform="translate(1340 660) scale(.33333)" d="M65 75L110 150M80 150L150 210L200 240M0 160L60 190L140 240M250 60L260 90L240 160M420 60L430 100L410 170M335 80L340 140M300 215L340 215L400 190M320 200L345 230L330 260M340 235H410M0 240L80 220L110 240M110 230L130 255M60 190L100 200L180 170M190 170L230 190M100 380L170 300M320 290L340 340L330 400M380 310L420 360M340 320L370 360L420 380M110 320L150 370M400 160L370 240M260 230L310 260M180 220L270 210M240 150L330 160"/>
      <path transform="translate(760 780) scale(.33333)" d="M105 135L210 123L300 145L386 145L400 135L402 110L460 88M280 162L386 140M400 110L400 280L405 320L425 370L480 430L530 470L610 490L640 470L600 410L560 395L540 360L535 320M405 285L422 283M565 88L610 150L640 170M750 88V120L740 200M655 155L750 120L890 95M750 120L790 180L800 240L795 340M680 225L720 280L795 345L755 350L660 465M665 230L650 290L610 330L618 370L590 415L565 485L520 560L500 600L495 658M530 600L495 650M640 470L655 495M660 465L700 505L760 505L860 520L890 518M640 470L660 465M800 240L900 225L940 225L975 270L1075 270M940 220L980 265M960 100L985 200L975 340M850 340L860 320L925 295L975 270M930 300L965 345H1140L1230 355L1440 350M1025 120L1060 230L1075 240M1170 125L1155 200L1140 290L1135 400L1140 440L1155 490L1140 540L1145 620M1140 290L1200 275L1220 250L1280 220M1140 290L1280 215M1005 395L990 410L1005 450L960 510L950 540M1245 420L1240 490L1215 580L1190 680M1245 490L1330 550L1270 560L1260 590L1210 620M1330 550L1365 620L1380 690L1415 740M1330 550L1440 540M1330 550L1380 500L1420 460M1365 620L1410 605L1440 540M1190 690L1290 710L1415 740M1290 705L1285 760L1270 810M1420 350V470L1440 540M1405 740V800M757 55H800L850 10M990 0L1005 60L1025 120M1200 0L1240 60L1280 110L1320 110L1380 130M1310 0L1318 85L1400 45L1440 50M1280 110L1285 200M1170 125L1280 108M940 10H1000M1190 0L1170 125M1440 800H1405"/>
      <path transform="translate(1180 840) scale(.33333)" d="M20 110L60 100L150 70L260 20L380 0M0 170H150L300 175L400 165H470M155 60L160 220L155 260M240 110L235 220L240 310M300 0L320 80M0 290L70 370L110 345L150 345L180 300L210 300M70 370L60 420L100 440L120 550L140 600M0 520L20 530L120 550L230 560M100 440L90 340L70 270M150 600L150 710L100 690M150 710L210 700L250 680L400 690L480 700M353 690L350 730L400 730L480 735M405 560L405 800L395 870M250 730L350 735M240 825L380 850L395 870L470 890M353 960L380 990L430 920L395 870M430 925L470 890M380 990L270 955L220 950M380 990H470M380 990L370 1050L390 1110L410 1125L490 1080M380 990L350 1040L260 1080M260 1080L290 1110L295 1190M390 1110L330 1195M410 1125L555 1175M520 1180L515 1260M430 1240H600M495 1220L560 1215M500 890L620 905M500 935L550 940M505 985L550 990M555 1000L570 1075M500 880L510 830L600 820L700 830M700 800L750 770M680 850L710 820M560 740L640 740L720 745L760 690L840 670M720 640L750 600L850 560M730 640L750 680L740 770M660 580L720 640M545 640L620 590L655 580M610 530L545 560M700 500L740 400L720 320M740 400L850 360M740 400L610 470M740 395L790 350M530 20L570 40L530 110L610 125L690 130M560 50L690 35M750 100L800 160L860 200L950 210M860 60L950 40L1040 60M820 220L850 240L830 300M900 30L890 130M1050 100L1100 130M1050 240L1170 220L1260 230L1320 180M1130 80L1230 190L1240 250M1160 100L1250 90L1330 120M1200 60L1280 50M1010 80L1110 70M640 50L650 110M200 300L210 400M0 0L30 30"/>
      <path class="d" transform="translate(1180 840) scale(.33333)" d="M250 430H330L410 500M300 400V520L250 560M330 560L400 550L480 560L540 540M405 520V690M360 600L480 610M370 460Q350 500 390 530M480 400L500 460M510 250L560 230L640 240M500 300L650 290M600 330L680 360M560 180L640 300M960 480L920 600L940 640M900 540L970 580L950 620M855 590L875 600V670H840M900 500L850 560M1000 470L940 560L960 610M1070 470L1110 560L1030 590V640M1100 520L1200 500M990 350L960 440L985 480L1120 470L1140 380L1080 340ZM1000 400V460M1150 380L1220 380M960 350L900 330M830 350L870 420M1060 200L1100 190M1010 110L1080 150M970 220L1040 230M1270 300L1285 345M1310 370L1350 360M1360 180L1350 300M1350 350L1280 480M1160 440L1220 470M1040 600L1050 620M500 900L540 870L640 880M680 850L710 820M600 900L625 910M860 690L960 640L1060 590L1190 530"/>
    </g>
    <g class="roads" transform="translate(990 430) scale(.33333)">
      <path class="w2" d="M178 150L205 198H290M683 135L612 173L602 215L565 237L520 277L490 283L405 330L345 352M300 370V405L312 430L315 490L327 540L340 600L330 632L312 645V755L320 810V900L290 962L248 1058L265 1130M73 562L135 600L215 680L310 755M130 725L160 753L305 760M205 760L215 800L225 860L290 962L380 1055L385 1090L440 1150L500 1180M275 778L245 805L225 860M117 850L120 920L150 965L160 1010L175 1070L205 1160M160 1060H180M410 650L413 665L405 700V738M318 760L345 738H400L445 742L485 733L515 748L585 753L615 745L660 767L735 757L770 745L830 755L755 790L735 860L710 935L703 955L735 1015L730 1050L735 1100L810 1190M920 1045L925 1075L990 1110M690 1200L720 1183L830 1195L910 1190L940 1165L990 1150M975 630V680M125 735L130 725"/>
      <path class="w2 k" d="M232 42L270 85L290 200"/>
      <path class="w3" d="M290 205V265L315 310V350M550 1025L530 990L500 960L470 910L405 850L345 785L310 765M830 755L850 738L890 732L975 685M265 1135L350 1165L430 1185L460 1165L525 1200"/>
      <path class="w4" d="M320 355L410 358L440 365L520 370L550 358H688"/>
      <path class="w4 k" d="M370 370L430 400L470 410L555 450L570 470L595 525L660 560L740 585L795 600L830 620L925 660L985 680"/>
      <path class="w5" d="M65 370H85L110 355L140 345L180 345L210 358L270 367H370M150 1200L205 1175L265 1135L330 1100L440 1060L520 1040L620 1018L730 1022L840 1045H920L970 1020L990 1015"/>
      <path d="M283 195H298V210H283ZM399 243H407V251H399ZM308 345H325V378H308ZM303 752H322V770H303ZM970 627H980V637H970ZM697 948H710V962H697ZM284 955H297V968H284ZM60 1167H67V1174H60ZM145 960H157V970H145Z" class="fill"/>
    </g>
    <g class="roads" transform="translate(1200 580) scale(.33333)">
      <path class="w2" d="M0 305L35 313L80 305L140 297L205 305L130 340L105 430L75 490V515L105 565L102 590V650L185 745H270L310 765L340 800L345 825L410 895M0 790L65 745L95 735L185 745M290 600V615L345 655L380 665L415 640L430 555M270 745L310 720L350 705L385 665L450 685L520 695L555 760L630 800L665 800L690 860L715 900M0 833L30 838L60 868L110 868L185 888L220 870L265 860L310 873H370L400 893M415 640L440 690M415 610L420 640L470 655M950 235L945 290L1010 330L1060 405L1068 515M975 570L965 550L950 515L870 460L835 415M885 637L1000 693L1040 770L1090 815L1110 830M615 590L635 665L640 700M640 790L755 670L885 640L975 605L1040 580M1110 590L1105 650L1120 700V760M1085 600L1090 640M1215 700L1225 770L1240 820L1260 850L1262 900M1105 830L1040 830L960 850L920 900M1250 598L1220 620L1200 660L1120 700M640 790L635 840L660 900M475 895H505"/>
      <path class="w3" d="M205 305L235 290L270 280L350 232M350 235L420 252L520 262L580 295L620 297M800 302L880 300L945 290L1045 298L1165 330M1060 408L1110 380L1165 335M835 415L930 420L980 410H1060M445 685L430 720L420 900M445 685L480 650M640 700L635 800L580 895M845 810L880 790L950 730L1000 695L1060 685L1095 655L1170 600L1185 565M845 810L790 890M1210 695L1175 710L1125 765"/>
      <path class="w4" d="M0 100L60 125L160 150L200 170L300 212L350 225L370 240M800 520L850 535L900 560L980 575L1100 580L1170 570L1250 573M1250 335L1230 370V425L1190 445L1187 560L1190 650L1215 695M1165 330L1250 335M1125 765L1115 850L1095 900M640 700L635 790L580 895"/>
      <path class="w4 k" d="M1250 335L1230 370V425L1190 445L1187 560L1190 650L1215 695M0 100L60 125L160 150L200 170L300 212L350 225"/>
      <path class="w5" d="M0 570L100 575L200 597H290L340 570L400 560L425 545M765 650L770 700L825 755L850 820L865 900M1240 333H1258"/>
      <path class="fill" d="M415 487H432V502H415ZM66 497H82V513H66ZM340 178H350V190H340ZM1107 434H1116V444H1107ZM418 392L430 402L425 406L417 398ZM1092 562H1115V578H1092ZM1215 825H1224V833H1215Z"/>
      <path class="hair" d="M985 597H1000L998 608H985Z"/>
    </g>
    <!-- Dallas and Fort Worth freeways -->
    <g class="roads" transform="translate(1340 660) scale(.33333)">
      <path class="w2 k" d="M105 152L130 148L200 153M110 152L135 185L147 205M0 255L30 252L90 268L140 272M300 55L295 110L272 160L270 230M316 45L318 100L320 130L300 190M312 155L350 168L415 175M388 115L415 175M200 158L174 200V330M80 280V345M60 340L85 345L135 300L160 262M115 310L140 340L160 348M195 350L215 425M272 350L262 400L220 425M300 280L375 295L380 320M378 305L400 345L465 397M240 340L262 362L300 368M230 320L240 290L270 280M0 345L15 310M330 15L318 45M150 262L170 245L215 240L235 215M310 235L345 270"/>
      <path class="w3" d="M315 150L340 125L400 75L370 60L318 50M175 262L280 255M160 272L290 268M225 235L250 195L305 175M305 180L240 225L250 250"/>
      <path class="w4" d="M145 286H310M155 275V355M50 395L110 375L165 355L235 340L265 315M250 210L270 255M300 250L350 235L385 205L415 178M300 275L380 280L430 295L470 315M0 305L30 285L80 268L150 275"/>
      <path class="w4" d="M200 60L230 52L300 48L370 60M235 190L290 200M165 345H190M245 200L300 190"/>
      <path class="w5" d="M202 30V150L240 195L270 240M272 205V355M300 290L305 350L345 400M265 250L320 245M150 350L180 348M395 68L405 78"/>
      <path class="hair" d="M190 230H260M195 245V320M215 230V290M180 305L210 330M165 330L190 320M220 260L240 300M250 170L290 210M230 200L250 240M285 170L275 230M320 215L330 260M270 320H310M190 200L220 210"/>
    </g>
    <g class="roads" transform="translate(760 780) scale(.33333)">
      <path class="w2" d="M655 120L642 172L675 225M860 0L888 95M848 10H872M940 0L955 85M1065 0L1075 35L1095 65L1160 115M895 130L905 175L900 225V255L928 292M888 227H905M1075 248V275L1140 292M1285 215V250L1270 300L1255 340L1245 410M1290 200L1350 170L1385 145L1440 135M1295 225L1355 240L1380 270H1440M1290 840L1340 803L1405 800L1410 760L1440 715M1422 0L1424 50L1440 80"/>
      <path class="w2 k" d="M795 345L825 385L860 425L865 445L883 460L885 515L905 540L950 543L985 573L1020 577L1050 595L1090 608L1100 622L1140 628L1160 660L1165 675L1200 685L1215 720L1240 750L1245 790L1270 835M560 300L600 318L730 338L795 345L860 353L900 347H950"/>
      <path class="w3" d="M560 300L610 255L675 225L740 197L800 185M965 92L1040 118L1120 133L1160 118L1210 140L1240 175L1290 200"/>
      <path class="w4" d="M950 350L1010 388L1040 382L1100 395L1140 390L1240 420L1280 425L1330 452L1405 433L1425 438L1440 460M740 197L800 185L890 130L960 90L1010 58L1070 28"/>
      <path class="w4 k" d="M52 80V125L68 142L90 138L115 155L145 205L185 240L215 278L235 283L270 270L330 290L390 312L500 303L560 300"/>
      <path class="w5" d="M950 92L1010 55L1070 28L1140 10L1200 0"/>
      <path class="fill" d="M1275 195H1302V220H1280ZM885 110H905V135H888ZM750 118H757V125H750ZM635 467H643V474H635Z"/>
      <path class="hair" d="M75 105L90 100L110 125M80 120L95 105"/>
    </g>
    <g class="roads" transform="translate(1180 840) scale(.33333)">
      <path class="w2" d="M30 30L35 50L90 62L120 90H180L248 107L270 85L325 78L360 92L425 88M0 10L60 10M28 30L25 80L5 130M380 0L400 50L440 95L480 130M210 303L335 310L370 322L430 315L440 328L500 325L545 318M485 130L560 112M690 10L740 40L745 80L770 105L780 145L845 210L905 290L908 330M700 20L720 110L722 165L745 205M750 210L820 280L850 350L885 412M780 245L830 225L880 170L930 155L970 140L1000 85L1030 65L1140 48L1170 15M908 292H965L1000 285L1090 298L1190 315L1210 340H1280M1110 0L1150 40M1290 0L1295 40L1320 90V190L1340 215L1325 280L1290 295M520 500L540 640L565 735L600 800L630 830M380 517L260 525L180 540L150 570L142 620H90L15 670M15 672L125 690L155 730L190 755L195 800L220 860M600 470L635 500L655 535L658 585L715 645L770 690L795 693M435 530L425 560L430 610L460 650L485 740M400 600L405 625L425 612M485 745L540 800L590 855M600 860L630 885L655 850L610 825M1135 335L1140 390L1160 345M1040 470L1035 540L1045 545M1250 410L1330 400L1360 370M1280 320V345M550 170L540 220L560 250M210 950L240 940M590 360L580 420L540 440M608 245H635V285L660 315M885 410L960 440M930 365L925 385M570 735L580 775L550 808M1112 425L1110 470L1128 510M400 485L410 465H500M435 430L480 445"/>
      <path class="w2 k" d="M490 765L495 860V900L485 1020L495 1110L490 1200L485 1230L460 1245M590 860L580 885L545 950L555 1000L560 1080V1210L570 1240L605 1273M600 350L580 335L560 345"/>
      <path class="w3" d="M480 0V130L465 230L435 310L430 370V450L420 490M480 130L540 180L570 230M195 290L240 320L320 355L370 410L400 470M210 945L280 910L340 885L400 860L445 820L490 760L555 750L630 685L710 660V715L620 820L590 860M1065 450L1100 500L1120 515M590 860L630 885M600 295H640L665 315L690 330"/>
      <path class="w4" d="M0 240L70 270L150 252L200 300M690 0L650 100L610 150L590 210V300M955 0L890 60L800 160L745 210L775 250L715 320M700 330L660 350L600 360L560 385L530 410M700 330L770 340L820 325L900 350L990 390M1060 390L1080 340L1130 240V200L1150 160L1165 60L1185 0M1250 410L1300 350L1385 345M705 660L780 620L860 565L900 520L960 475L1020 455M300 600L285 680L255 770L225 890L212 950M300 600L340 570L410 520M1080 420L1150 410L1250 410"/>
      <path class="w5" d="M890 0L910 80L940 150L1010 215L1020 290L1033 400M590 225L595 280L570 320L540 390L490 445L410 505M440 500L520 465L600 455L780 445L900 428L1020 430M860 565L900 520L960 475L1020 450M212 950L225 890M820 335L900 350L1000 400M1070 420L1160 410"/>
      <path class="fill" d="M1005 410L1020 400L1050 395L1075 405L1100 418L1085 440L1045 452L1010 445ZM390 490L435 480L440 510L405 525ZM560 235H580L600 270V300L580 310L555 265ZM520 380H545L540 410H518ZM203 930H222V957H203ZM393 597H405V620H393ZM485 552L497 562L492 568L482 560ZM640 345H665V362H640ZM605 115H618V128H605ZM735 392H747V400H735ZM1275 45H1283V52H1275ZM625 880H637V893H625ZM645 845H660V855H645ZM590 815H615L605 840H592ZM490 890H502V902H490ZM470 428H492V448H470Z"/>
      <path class="hair" d="M990 340L1010 370L990 420M960 430L980 450L1090 440M1000 465H1080M1140 355H1155L1150 395M1140 430H1165M1120 515L1165 540M1035 540L1030 600L1050 620M1290 340L1310 370L1330 365M430 460H520M360 490L390 530M540 400L590 330M570 200L600 250M960 410L990 450M1120 385L1160 360L1180 360M1090 425L1130 440"/>
    </g>
    </g>
  </svg>
</div>
</body>
</html>
```
FILE: styles.css
```css
* { box-sizing: border-box; }
body { margin: 0; width: 2185px; height: 1292px; overflow: hidden; background: #1e1e1e; color: #e2e2e2; font-family: Inter, "Liberation Sans", sans-serif; font-size: 12.5px; display: flex; flex-direction: column; }
i { font-style: normal; }
.defs { position: absolute; width: 0; height: 0; }
.titlebar { height: 28px; flex: none; background: #433836; border-bottom: 1px solid #050505; display: grid; grid-template-columns: 100px 1fr 100px; align-items: center; border-top-left-radius: 10px; }
.lights { display: flex; gap: 8px; padding-left: 6px; }
.lights i { width: 12px; height: 12px; border-radius: 50%; }
.close { background: #ee6a5f; }
.min { background: #f5bf4f; }
.max { background: #5fc454; }
.title { text-align: center; font-weight: 700; font-size: 12.8px; letter-spacing: .25px; color: #bdb3b1; padding-bottom: 1px; }
.toolbar { height: 39px; flex: none; display: flex; align-items: center; padding-bottom: 2px; background: linear-gradient(#2f2f2f, #353535 40%, #313131); border-bottom: 1px solid #7d7d7d; }
.toolbar.last { height: 38px; padding-bottom: 1px; }
.tool { width: 24px; height: 24px; margin: 0 4.5px; flex: none; display: block; }
.dim { opacity: .24; }
.half { opacity: .42; }
.grip { width: 5px; height: 17px; margin: 0 6px 0 5px; flex: none; background: repeating-linear-gradient(#0000 0 2px, #333 2px 3px), linear-gradient(90deg, #868686 0 2px, #0000 2px 3px, #868686 3px 5px); }
.grip.first { margin: 0 2.5px 0 3px; }
.grip.end { margin-left: 8px; }
.pressed { border: 1px solid #191919; border-radius: 3px; background: #3a3a3a; padding: 2px 0; margin: 0 1px; width: 31px; display: flex; justify-content: center; }
.drop { width: 12px; flex: none; display: flex; justify-content: center; }
.drop::after { content: ""; border: 4px solid #0000; border-top: 4.5px solid #b5b5b5; border-bottom: 0; transform: translateX(-1px); }
.sep { width: 7px; height: 20px; flex: none; border-left: 1px solid #222; margin: 0; transform: translateX(3px); }
.menu { display: flex; position: relative; }
.tip { position: absolute; right: 3px; bottom: -2px; border: 2.5px solid #0000; border-top: 3px solid #b5b5b5; border-bottom: 0; }
.main { flex: 1; display: flex; min-height: 0; }
.panel { width: 600px; display: flex; flex-direction: column; background: #323232; }
.panel-head { height: 21px; display: flex; justify-content: space-between; align-items: center; padding: 0 0 0 2px; font-size: 10.5px; }
.panel-tools { height: 30px; display: flex; align-items: center; padding: 0 0 4px 1px; border-bottom: 1px solid #222; }
.pt { width: 16px; height: 16px; margin: 0 4.5px; flex: none; display: block; }
.tree { flex: 1; background: #1e1e1e; }
.row { height: 18px; display: flex; align-items: center; padding-left: 5px; white-space: nowrap; font-weight: 500; font-size: 12.4px; letter-spacing: .1px; }
.row.sub { padding-left: 42px; }
.row.selected { background: #464646; padding-left: 22px; }
.row b { font-size: 12.6px; letter-spacing: .4px; color: #e6e6e6; }
.row .num { letter-spacing: .36px; }
.row .u { color: #fff; letter-spacing: .3px; text-decoration: underline; text-underline-offset: 2px; }
.exp { border: 4px solid #0000; border-top: 5px solid #a5a5a5; border-bottom: 0; margin-right: 9px; }
.chk { width: 14px; height: 14px; flex: none; border: 1px solid #2a2a2a; display: flex; align-items: center; justify-content: center; }
.chk::after { content: ""; width: 4px; height: 8px; border: solid #dedede; border-width: 0 1.5px 1.5px 0; transform: rotate(32deg) translate(-1px, -1px); }
.lic { width: 16px; height: 16px; margin: 0 6px; flex: none; }
.lic.tab { width: 16px; height: 17px; margin-left: 0; }
.ind { width: 16px; height: 16px; margin-left: auto; margin-right: 5px; background: #222; }
.selected .ind { background: #1c1c1c; }
.ln { width: 18px; margin: 0 6px; background: #000; flex: none; }
.l1 { height: 1px; } .l2 { height: 2px; } .l3 { height: 4px; } .l4 { height: 6px; } .l5 { height: 9px; }
.sw { width: 18px; height: 18px; margin: 0 6px; flex: none; border: 1px solid #0006; border-width: 1px 0 0 1px; }
.corpus { background: #e15989; }
.houston { background: #e3b436; }
.beaumont { background: #c23a38; }
.elpaso { background: #bcaf93; }
.dallas { background: #91512d; }
.rest { background: #7d8b8f; }
.sanantonio { background: #85b66f; }
.austin { background: #a47159; }
.laredo { background: #d2b33a; }
.splitter { width: 8px; background: #2d2d2d; border-left: 1px solid #232323; display: flex; align-items: center; justify-content: center; }
.splitter i { width: 2px; height: 17px; margin-top: 190px; background: repeating-linear-gradient(#868686 0 2px, #2d2d2d 2px 3px); }
.map { display: block; flex: none; background: #fff; border-top: 1px solid #1e1e1e; height: 1148px; }
.core { fill: #7d8b8f; stroke: #7d8b8f; stroke-width: 2; }
.rest-f { fill: #7d8b8f; stroke: #3c4345; stroke-width: 2.6; }
.rg { stroke: #3a3a32; stroke-width: 2.6; stroke-opacity: .8; }
.thin path { fill: none; stroke: #000; stroke-opacity: .32; stroke-width: 2.4; }
.thin .d { stroke-opacity: .45; }
.roads path { fill: none; stroke: #000; stroke-linejoin: round; }
.roads .hair { stroke-width: 3.5; }
.roads .w2 { stroke-width: 6.5; }
.roads .w2.k { stroke-width: 8; }
.roads .w3 { stroke-width: 11; }
.roads .w4 { stroke-width: 14.5; }
.roads .w4.k { stroke-width: 17; }
.roads .w5 { stroke-width: 21; }
.roads .fill { fill: #000; stroke: none; }
```
